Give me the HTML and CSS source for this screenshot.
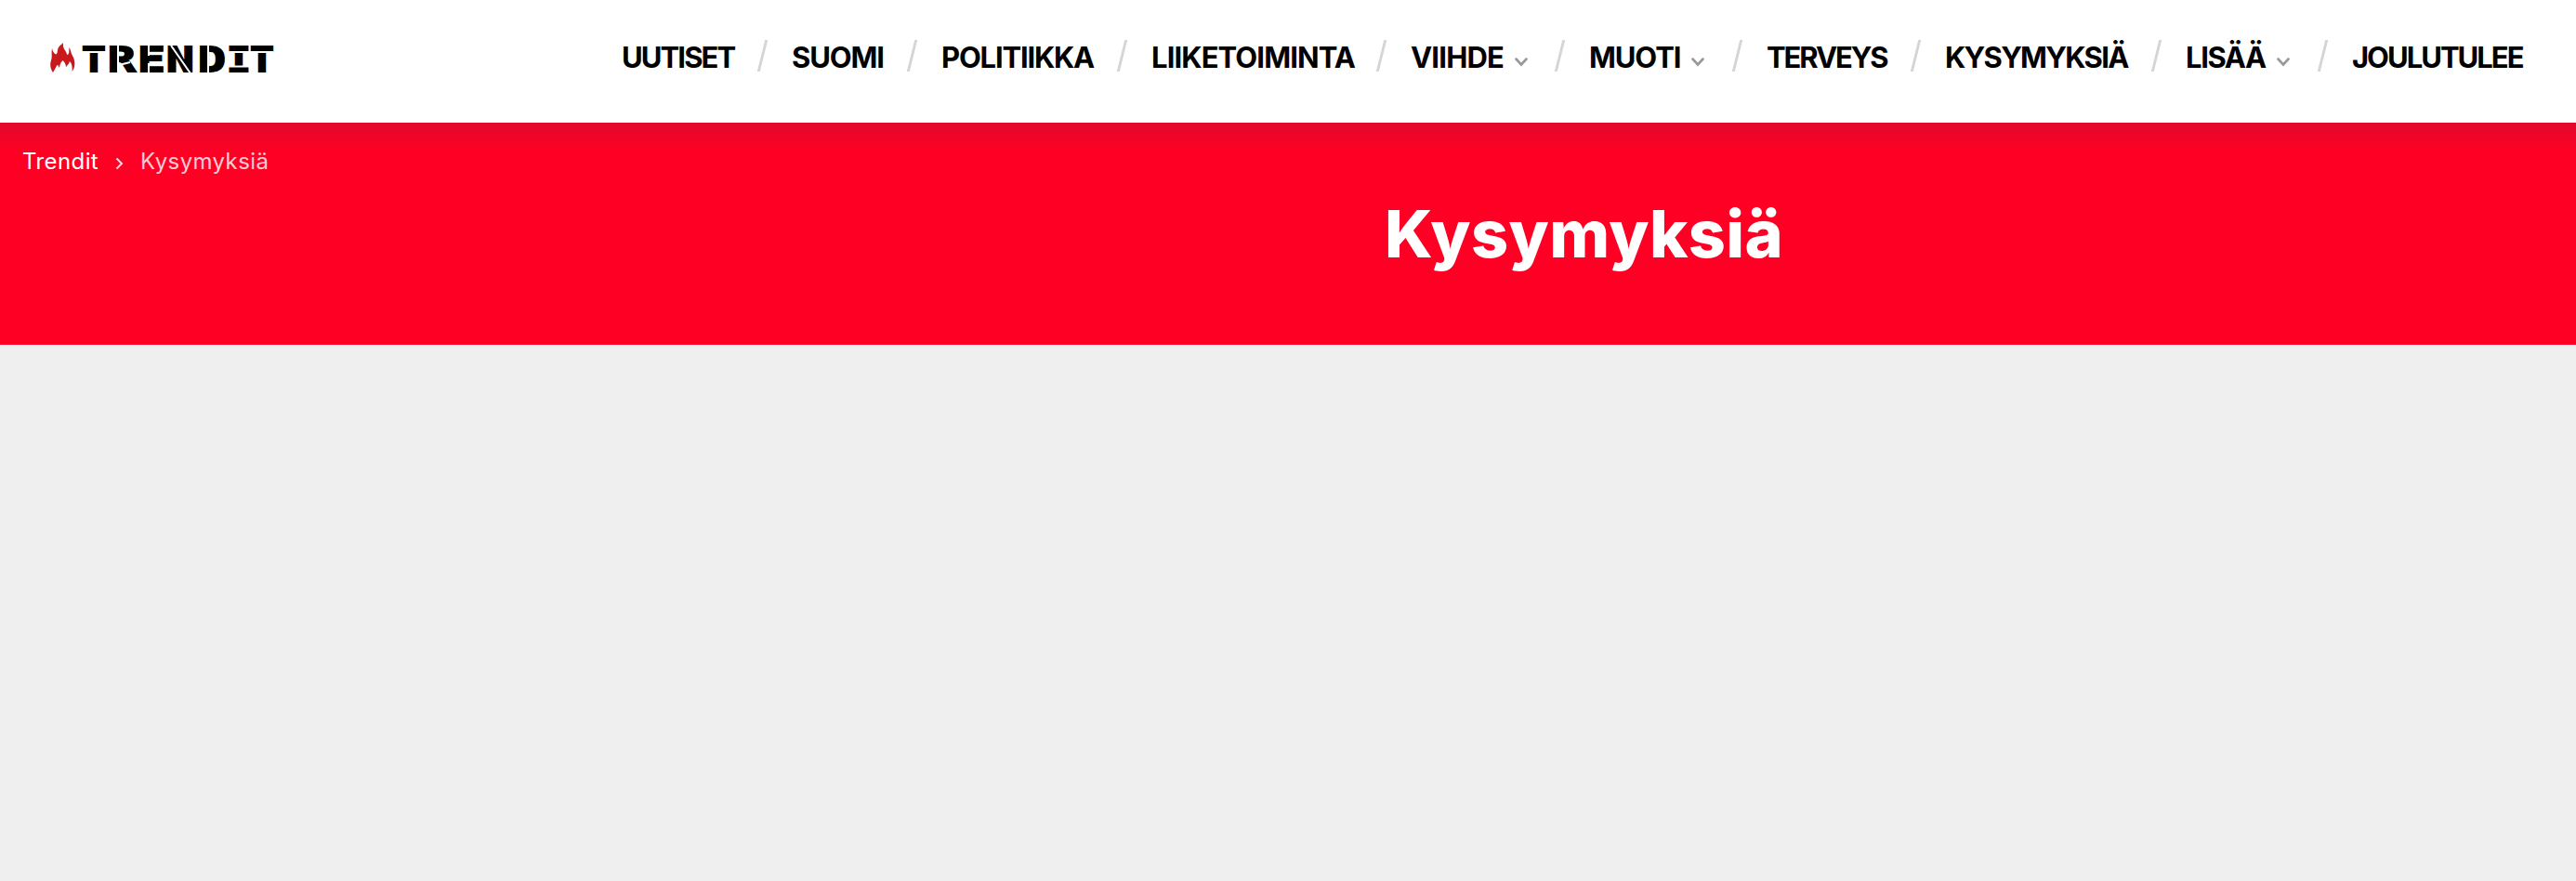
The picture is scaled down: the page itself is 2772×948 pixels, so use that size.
FILE: index.html
```html
<!DOCTYPE html>
<html lang="fi">
<head>
  <meta charset="UTF-8" />
  <meta name="viewport" content="width=device-width, initial-scale=1.0"/>
  <title>Kysymyksiä - Trendit</title>
  <link rel="stylesheet" href="styles.css">
</head>
<body>
  <header class="header">
    <a class="logo">
      <svg class="flame" viewBox="0 0 27 33" width="27" height="33">
        <path d="M3 32C0 28-.5 23 1 19C2.500 15 1 11 2 6C2.500 9 3.500 11 6 12.500C8 12 7.500 9 8.500 6C9.500 3 12 2.500 14 0C13.500 5 15 7 16.500 9C18 11 17.500 12.500 18.500 13C21 12 20 9 20.500 5C22.500 8 22 11 24 14C27 19 27.500 26 23.500 31C24 27 23.500 22 21 20C20.500 23 18 24 17 26.500C17 24 16 21 13.500 19C11 22 10.500 23 10 27C9 26 9 24 7.500 24C6 26 5 29 3 32Z" fill="#c8191c"/>
      </svg>
      <span class="logo-name">
        <span class="logo-text"><b>T</b><b class="wide">R</b><b class="wide">E</b><b class="wide">N</b><b class="wide">D</b><b>I</b><b>T</b></span>
        <!-- stencil cuts -->
        <svg class="cuts" viewBox="0 0 206 30" width="206" height="30">
          <path d="M0 7H26M156 7H206M156 22.500H180M39 0V30M72 0V11M72 19V30M136 0V30M96 0L117 30M40 21L52 18"/>
        </svg>
      </span>
    </a>
    <ul class="menu">
      <li class="uutiset"><a>UUTISET</a><i class="slash"></i></li>
      <li class="suomi"><a>SUOMI</a><i class="slash"></i></li>
      <li class="politiikka"><a>POLITIIKKA</a><i class="slash"></i></li>
      <li class="liiketoiminta"><a>LIIKETOIMINTA</a><i class="slash"></i></li>
      <li class="viihde"><a>VIIHDE</a><svg class="arrow" viewBox="0 0 14 10"><path d="M1.500 1.500L7 7.500L12.500 1.500"/></svg><i class="slash"></i></li>
      <li class="muoti"><a>MUOTI</a><svg class="arrow" viewBox="0 0 14 10"><path d="M1.500 1.500L7 7.500L12.500 1.500"/></svg><i class="slash"></i></li>
      <li class="terveys"><a>TERVEYS</a><i class="slash"></i></li>
      <li class="kysymyksia"><a>KYSYMYKSIÄ</a><i class="slash"></i></li>
      <li class="lisaa"><a>LISÄÄ</a><svg class="arrow" viewBox="0 0 14 10"><path d="M1.500 1.500L7 7.500L12.500 1.500"/></svg><i class="slash"></i></li>
      <li class="joulutulee"><a>JOULUTULEE</a></li>
    </ul>
  </header>

  <section class="banner">
    <div class="breadcrumb">
      <a>Trendit</a>
      <svg viewBox="0 0 9 14" width="9" height="14"><path d="M1.500 1.500L7 7L1.500 12.500"/></svg>
      <span>Kysymyksiä</span>
    </div>
    <h1>Kysymyksiä</h1>
  </section>
</body>
</html>
```
FILE: styles.css
```css
body {
  margin: 0;
  background-color: #efefef;
  font-family: Inter, "Open Sans", sans-serif;
}

.header {
  display: flex;
  justify-content: space-between;
  box-sizing: border-box;
  height: 132px;
  padding: 0 56px 0 54px;
  background-color: #fff;
}

.logo {
  display: flex;
  align-items: flex-start;
  gap: 7px;
  padding-top: 46px;
}

.logo-name {
  position: relative;
  width: 206px;
  height: 30px;
  margin-top: 3px;
}

.logo-text {
  display: grid;
  grid-template-columns: 25px 36px 28px 34px 33px 25px 25px;
  justify-items: center;
  font: bold 38px/30px "DejaVu Sans Mono", monospace;
  color: #000;
  -webkit-text-stroke: 2px #000;
}

.logo-text b {
  display: flex;
  justify-content: center;
  width: 24px;
  transform: scaleX(1.13);
}

.logo-text .wide {
  transform: scaleX(1.3);
}

.cuts {
  position: absolute;
  left: 0;
  top: 0;
  fill: none;
  stroke: #fff;
  stroke-width: 2;
}

.menu {
  display: grid;
  grid-template-columns: 183px 161px 226px 279px 192px 191px 192px 259px 179px 185px;
  margin: 0;
  padding: 0;
  list-style: none;
}

.menu li {
  display: flex;
  align-items: center;
  height: 122px;
  font-size: 31px;
  font-weight: 700;
  color: #000;
  white-space: nowrap;
}

.uutiset { letter-spacing: -1.9px; }
.suomi { letter-spacing: -1.1px; }
.politiikka { letter-spacing: -1.2px; }
.liiketoiminta { letter-spacing: -0.9px; }
.viihde { letter-spacing: -0.8px; }
.muoti { letter-spacing: -1.1px; }
.terveys { letter-spacing: -2.1px; }
.kysymyksia { letter-spacing: -1.7px; }
.lisaa { letter-spacing: -1.4px; }
.joulutulee { letter-spacing: -2px; }

.slash {
  width: 2.5px;
  height: 34px;
  margin: 0 31px 2px auto;
  background-color: #d5d5d5;
  transform: skewX(-14deg);
}

.arrow {
  width: 14px;
  height: 10px;
  margin: 12px 0 0 12px;
  fill: none;
  stroke: #999;
  stroke-width: 2.6;
  stroke-linecap: round;
}

.banner {
  height: 239px;
  background: #ff0025 linear-gradient(#e2082b, #ff0025) no-repeat 0 0 / 100% 32px;
  color: #fff;
}

.breadcrumb {
  display: flex;
  align-items: center;
  gap: 18px;
  height: 83px;
  padding-left: 24px;
  font-size: 24px;
  letter-spacing: 0.4px;
}

.breadcrumb svg {
  margin-top: 4px;
  fill: none;
  stroke: #ffdbe0;
  stroke-width: 2;
}

.breadcrumb span {
  color: #ffccd3;
}

h1 {
  margin: 0 0 0 1490px;
  font-size: 70px;
  line-height: 74px;
  font-weight: 800;
  letter-spacing: 0.4px;
}
```
